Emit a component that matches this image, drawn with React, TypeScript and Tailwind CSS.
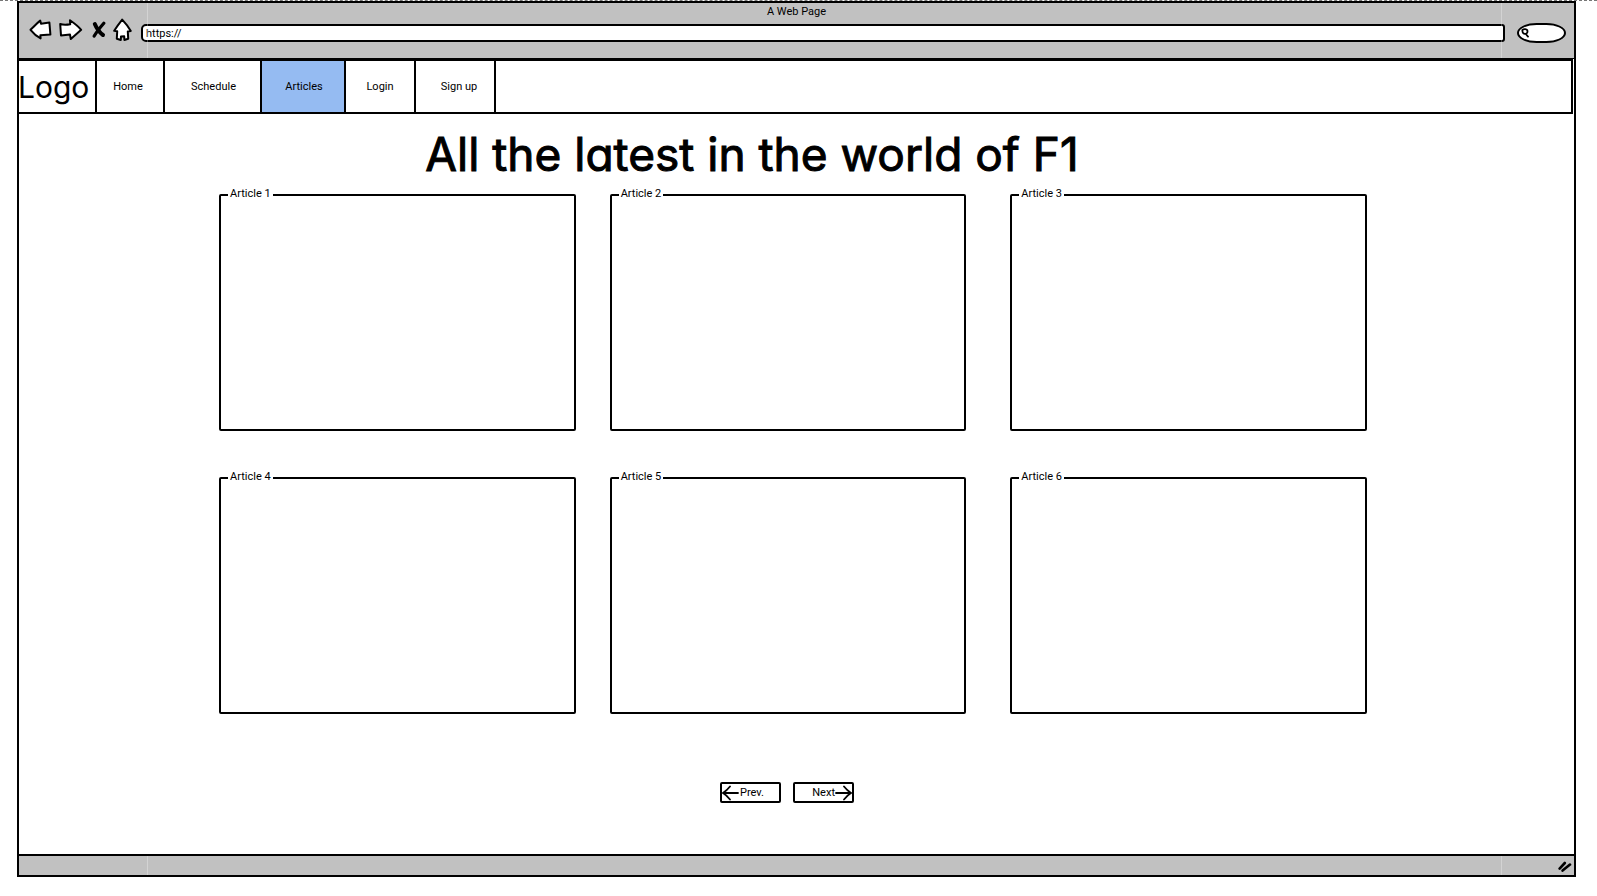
import React from "react";

const tabs = [
  { name: "Home", style: "w-[68px] pr-1" },
  { name: "Schedule", style: "w-[97px] pl-[2px]" },
  { name: "Articles", style: "w-[84px] bg-[#95bbf2] pl-[2px]" },
  { name: "Login", style: "w-[70px]" },
  { name: "Sign up", style: "w-[80px] pl-2" },
];

const articles = [
  { name: "Article 1", column: "col-start-1" },
  { name: "Article 2", column: "col-start-3" },
  { name: "Article 3", column: "col-start-5" },
  { name: "Article 4", column: "col-start-1" },
  { name: "Article 5", column: "col-start-3" },
  { name: "Article 6", column: "col-start-5" },
];

const sketch = {
  fill: "white",
  stroke: "black",
  strokeWidth: 2,
  strokeLinejoin: "round" as const,
  strokeLinecap: "round" as const,
};

function BackIcon() {
  return (
    <svg width="24" height="22" viewBox="0 0 24 22" {...sketch}>
      <path d="M1.5 10.8 C4.5 8 7.5 4.5 11.2 1.6 L12 4.8 L20.4 3.6 L21.4 15.6 L11.4 16.2 L11.6 19.4 C8 17.5 4.5 14.5 1.5 10.8 Z" />
    </svg>
  );
}

function ForwardIcon() {
  return (
    <svg width="24" height="22" viewBox="0 0 24 22" {...sketch}>
      <path d="M1.2 5 C4.5 6 8 5.8 11.2 5.2 L11 1.2 C15 4 19 7 22.2 10.8 L11.8 20 L11 15.6 L2 16.4 Z" />
    </svg>
  );
}

function StopIcon() {
  return (
    <svg width="14" height="18" viewBox="0 0 14 18" fill="none" stroke="black" strokeLinecap="round">
      <path d="M2.8 3 C4.5 7 7.5 11.5 11 14" strokeWidth="4" />
      <path d="M11.8 2.2 C8.5 6 4.8 10.5 2.2 15" strokeWidth="3.2" />
    </svg>
  );
}

function HomeIcon() {
  return (
    <svg width="20" height="24" viewBox="0 0 20 24" {...sketch}>
      <path d="M9.2 1.6 C6.5 5 3.6 9 1.2 12.8 L4.2 13.2 L3.8 20.8 L7.8 22 L8 18.4 L11.2 18.2 L11.4 22 L15.2 20.8 L14.8 13.4 L17.8 13 C15.4 8.8 12.4 5 9.2 1.6 Z" />
    </svg>
  );
}

function Arrow({ right = false }: { right?: boolean }) {
  return (
    <svg width="17" height="16" viewBox="0 0 17 16" fill="none" stroke="black" strokeWidth="1.8" strokeLinecap="round" className="shrink-0">
      {right ? (
        <path d="M1 8 H15 M9 1.5 C11 4 13 6 16 8 C13 9.8 11 12 9 14.5" />
      ) : (
        <path d="M16 8 H2 M8 1.5 C6 4 4 6 1 8 C4 9.8 6 12 8 14.5" />
      )}
    </svg>
  );
}

function Seams() {
  return (
    <>
      <span className="absolute inset-y-0 left-32 w-px bg-white/30" />
      <span className="absolute inset-y-0 right-[72px] w-px bg-white/30" />
    </>
  );
}

export default function App() {
  return (
    <div className="bg-white pb-[20px] font-[Roboto,sans-serif] text-[11px] leading-4 text-black">
      <div className="border-t border-dashed border-[#777]" />
      <div className="mr-[21px] ml-[17px] border-2 border-black">
        <header className="relative h-[56px] border-b border-black bg-[#c1c1c1] pt-px">
          <Seams />
          <p className="text-center">A Web Page</p>
          <div className="flex items-center pt-[3px] pr-2 pl-[10px]">
            <button aria-label="Back" className="-mt-1.5"><BackIcon /></button>
            <button aria-label="Forward" className="-mt-1.5 ml-[6px]"><ForwardIcon /></button>
            <button aria-label="Stop" className="-mt-1.5 ml-[9px]"><StopIcon /></button>
            <button aria-label="Home page" className="-mt-1.5 ml-[7px]"><HomeIcon /></button>
            <input
              aria-label="Address"
              defaultValue="https://"
              className="ml-2 h-[18px] min-w-0 flex-1 rounded-[3px] rounded-l-[5px] border-2 border-black bg-white px-[3px] outline-none"
            />
            <label className="ml-3 flex h-5 w-[49px] items-center rounded-[40%/50%] border-2 border-black bg-white pl-[2px]">
              <svg width="8" height="10" viewBox="0 0 8 10" fill="none" stroke="black" strokeWidth="1.8" strokeLinecap="round" className="shrink-0">
                <path d="M1.4 2 C2.8 0.8 5.6 1 6.3 2.3 C6.8 4 6.2 5.4 4.6 5.8 C2.6 6.2 1.2 5 1.4 2 Z M4.8 6 L7 8.6" />
              </svg>
              <input aria-label="Search" className="w-full min-w-0 bg-transparent outline-none" />
            </label>
          </div>
        </header>

        <nav className="mr-px flex h-[55px] border-y-2 border-r-2 border-black">
          <a href="#" className="-ml-px flex w-[79px] items-center border-r-2 border-black font-[Inter,sans-serif] text-[30px] leading-none [font-feature-settings:'cv11']">
            Logo
          </a>
          {tabs.map((tab) => (
            <a key={tab.name} href="#" className={"flex items-center justify-center border-r-2 border-black " + tab.style}>
              {tab.name}
            </a>
          ))}
        </nav>

        <main className="pt-[9px] pr-[207px] pb-[51px] pl-[200px]">
          <h1 className="pr-[82px] text-center font-[Inter,sans-serif] text-[46px] leading-[63px] font-normal [-webkit-text-stroke:1px_black] [font-feature-settings:'cv11'] [stroke-linejoin:round]">
            All the latest in the world of F1
          </h1>
          <div className="grid grid-cols-[1fr_34px_1fr_44px_1fr] gap-y-[38px]">
            {articles.map((article) => (
              <fieldset key={article.name} className={"h-[245px] rounded-[2px] border-2 border-black pl-[7px] " + article.column}>
                <legend className="px-[2px] pb-[2px]">{article.name}</legend>
              </fieldset>
            ))}
          </div>
          <div className="flex justify-center gap-3 pt-[68px] pr-[12px]">
            <button className="flex h-[21px] w-[61px] items-center gap-px rounded-[2px] border-2 border-black">
              <Arrow />
              Prev.
            </button>
            <button className="flex h-[21px] w-[61px] items-center justify-end rounded-[2px] border-2 border-black">
              Next
              <Arrow right />
            </button>
          </div>
        </main>

        <footer className="relative flex h-[21px] items-center justify-end border-t-2 border-black bg-[#c1c1c1] pr-[2px]">
          <Seams />
          <svg width="14" height="12" viewBox="0 0 14 12" fill="none" stroke="black" strokeWidth="2.6" strokeLinecap="round">
            <path d="M1.6 8.6 L6.8 3 M4.6 10.6 L12 4.6" />
          </svg>
        </footer>
      </div>
    </div>
  );
}
